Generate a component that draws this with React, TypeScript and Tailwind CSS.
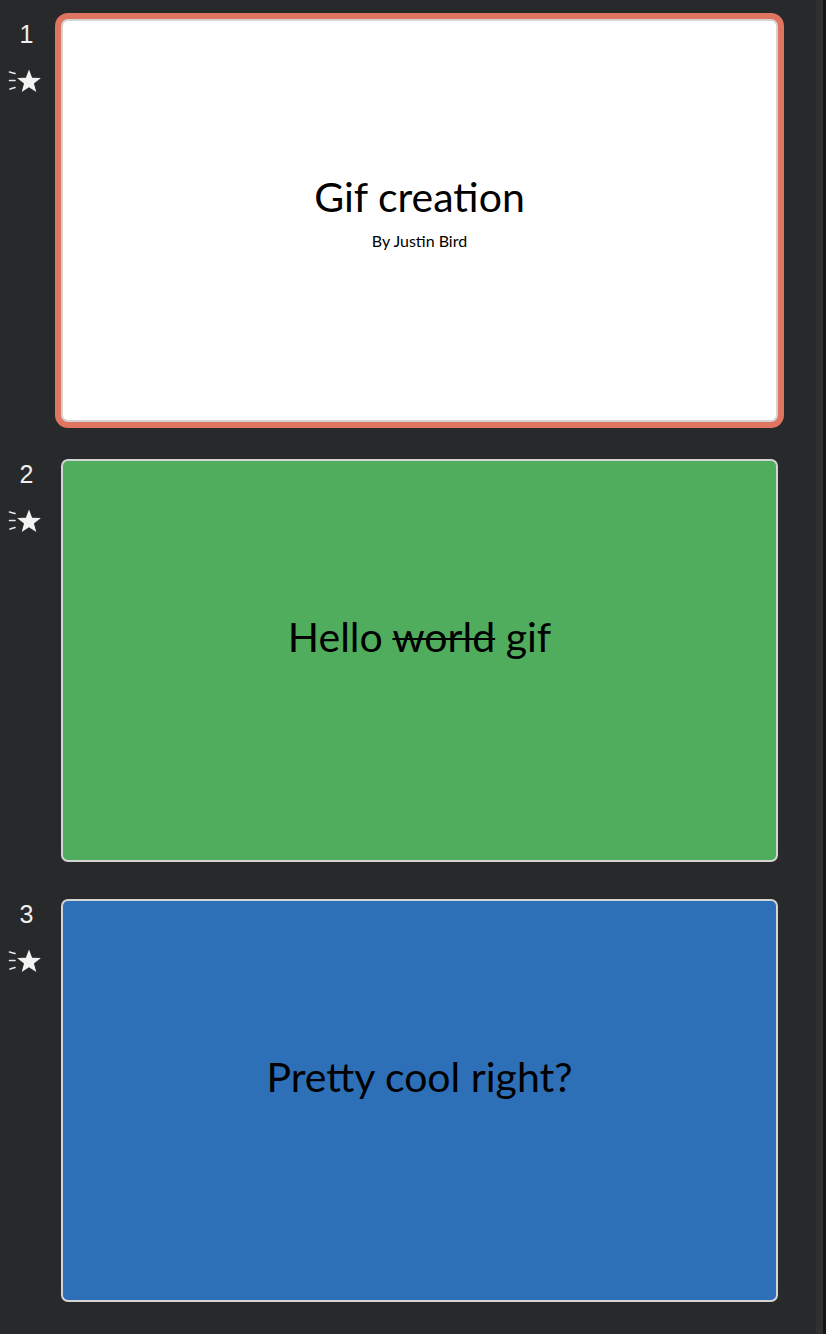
import type { ReactNode } from "react";

type Slide = {
  id: number;
  bg: string;
  content: ReactNode;
};

const slideFont = { fontFamily: "Lato, 'Open Sans', sans-serif" };

// little "has animation" marker next to each thumbnail
function AnimStar() {
  return (
    <svg width="38" height="25" viewBox="0 0 38 25" fill="none">
      <path d="M4.5 3 L10 4.5" stroke="#e8e8e8" strokeWidth="1.6" strokeLinecap="round" />
      <path d="M4.5 11.5 L10 11.5" stroke="#e8e8e8" strokeWidth="1.6" strokeLinecap="round" />
      <path d="M5 20 L10 18.5" stroke="#e8e8e8" strokeWidth="1.6" strokeLinecap="round" />
      <path
        d="M24 0.5 L27.1 8.8 L35.9 9.1 L28.9 14.6 L31.3 23.1 L24 18.2 L16.7 23.1 L19.05 14.6 L12.1 9.1 L20.9 8.8 Z"
        fill="#f2f2f2"
      />
    </svg>
  );
}

const slides: Slide[] = [
  {
    id: 1,
    bg: "bg-white",
    content: (
      <div className="flex flex-col items-center pb-[15px]">
        <div className="text-[41px] leading-[37px] text-black">Gif creation</div>
        <div className="mt-[19px] text-[16px] leading-[14px] text-black">By Justin Bird</div>
      </div>
    ),
  },
  {
    id: 2,
    bg: "bg-[#50ad5d]",
    content: (
      <div className="pb-[48px] text-[41px] leading-none text-black">
        Hello <span className="line-through decoration-[2px]">world</span> gif
      </div>
    ),
  },
  {
    id: 3,
    bg: "bg-[#2d70b8]",
    content: <div className="pb-[48px] text-[41px] leading-none text-black">Pretty cool right?</div>,
  },
];

export default function App() {
  const selected = 1;

  return (
    <div className="flex min-h-[1334px] w-[826px] bg-[#28292b]">
      <div className="flex flex-1 flex-col gap-[37px] pt-[19px]">
        {slides.map((s) => (
          <div key={s.id} className="flex">
            <div
              className="flex w-[61px] shrink-0 flex-col pt-[3px] text-[25px] leading-[24px] text-[#f0f0f0]"
              style={{ fontFamily: "'Liberation Sans', Arial, sans-serif" }}
            >
              <span className="pr-[8px] text-center">{s.id}</span>
              <div className="ml-[5px] mt-[23px]">
                <AnimStar />
              </div>
            </div>
            <div
              className={`flex h-[403px] w-[717px] items-center justify-center rounded-[7px] border-2 border-[#d4d4d4] ${s.bg} ${
                s.id === selected ? "ring-[6px] ring-[#df7461]" : ""
              }`}
              style={slideFont}
            >
              {s.content}
            </div>
          </div>
        ))}
      </div>
      <div className="w-[7px] bg-[#303031]" />
      <div className="w-[3px] bg-[#151515]" />
    </div>
  );
}
